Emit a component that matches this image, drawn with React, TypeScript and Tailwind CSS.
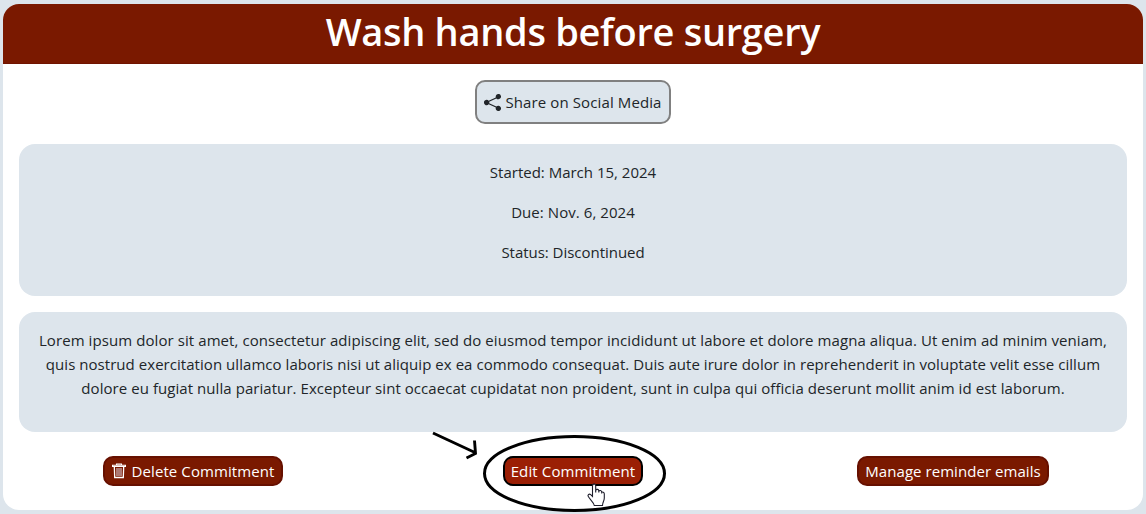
import React from "react";
import { BsShareFill } from "react-icons/bs";

const details = [
  { text: "Started: March 15, 2024", spacing: "tracking-[0px]" },
  { text: "Due: Nov. 6, 2024", spacing: "tracking-[0.06px]" },
  { text: "Status: Discontinued", spacing: "tracking-[-0.03px]" },
];

const description = [
  {
    text: "Lorem ipsum dolor sit amet, consectetur adipiscing elit, sed do eiusmod tempor incididunt ut labore et dolore magna aliqua. Ut enim ad minim veniam,",
    spacing: "tracking-[0.08px]",
  },
  {
    text: "quis nostrud exercitation ullamco laboris nisi ut aliquip ex ea commodo consequat. Duis aute irure dolor in reprehenderit in voluptate velit esse cillum",
    spacing: "tracking-[0.045px]",
  },
  {
    text: "dolore eu fugiat nulla pariatur. Excepteur sint occaecat cupidatat non proident, sunt in culpa qui officia deserunt mollit anim id est laborum.",
    spacing: "tracking-[0.06px]",
  },
];

function TrashIcon() {
  return (
    <svg width="14" height="16" viewBox="0 0 14 16" fill="none" stroke="#fff" className="shrink-0">
      <path d="M0.5 3.500V2.200H13.500V3.500ZM4.500 2.200V1H9.500V2.200" strokeWidth="1.100" />
      <path d="M2.300 3.500L2.700 14.500H11.300L11.700 3.500" strokeWidth="1.300" />
      <path d="M5 5V13M7 5V13M9 5V13" stroke="#e3dce8" />
    </svg>
  );
}

function Annotations() {
  return (
    <svg className="pointer-events-none absolute left-[420px] top-[425px]" width="260" height="89" fill="none" stroke="#000">
      <path d="M13 8L56 28M54.500 15.500L55.500 28.500L46.500 33" strokeWidth="2.900" />
      <ellipse cx="154.500" cy="48.500" rx="90" ry="37" strokeWidth="3" />
      <path
        transform="translate(167 58)"
        d="M5.500 13.500V3C5.500 .2 8.700 .2 8.700 3V9.500V7.200C9.500 5.800 11.600 6.300 11.800 7.700V9.500V8.200C12.500 6.900 14.600 7.400 14.700 8.900V10.500V9.500C15.500 8.600 17.200 9.100 17.300 10.700V15C17.300 18 15.500 19 15.500 22.500H7.300C7 19.500 3.500 17.300 1.300 13.500C.2 11.700 2.300 10.500 3.700 11.700Z"
        fill="#fff"
        stroke="#1d1d2b"
        strokeWidth="1.100"
      />
    </svg>
  );
}

export default function App() {
  return (
    <div className="relative h-[514px] w-[1146px] overflow-hidden bg-[#dde5ec] px-[3px] pt-1 font-['Open_Sans','Noto_Sans',sans-serif] text-[15px] leading-6 text-[#212529]">
      <main className="h-[506px] overflow-hidden rounded-2xl bg-white">
        <header className="flex h-[60px] items-center justify-center border-b border-[#701400] bg-[#7a1900] pb-[5px]">
          <h1 className="whitespace-nowrap text-[38px] font-semibold leading-[48px] tracking-[-0.3px] text-white">Wash hands before surgery</h1>
        </header>
        <div className="px-4 pt-4">
          <div className="flex justify-center">
            <button className="flex h-11 w-[196px] items-center justify-center gap-1 whitespace-nowrap rounded-[10px] border-2 border-[#808080] bg-[#dde5ec]">
              <BsShareFill size={17} className="shrink-0" />
              <span className="tracking-[0.11px]">Share on Social Media</span>
            </button>
          </div>
          <section className="mt-5 flex h-[152px] flex-col items-center gap-4 rounded-2xl bg-[#dde5ec] pt-4">
            {details.map((d) => (
              <p key={d.text} className={d.spacing}>{d.text}</p>
            ))}
          </section>
          <section className="mt-4 flex h-[120px] flex-col items-center whitespace-nowrap rounded-2xl bg-[#dde5ec] pt-4">
            {description.map((d) => (
              <p key={d.text} className={d.spacing}>{d.text}</p>
            ))}
          </section>
        </div>
        <div className="mt-6 grid grid-cols-3 justify-items-center whitespace-nowrap text-white">
          <button className="flex h-[30px] w-[180px] items-center justify-center gap-1.5 rounded-[10px] border-2 border-[#661000] bg-[#7a1900]">
            <TrashIcon />
            <span className="tracking-[0.08px]">Delete Commitment</span>
          </button>
          <button className="flex h-[30px] w-[140px] items-center justify-center rounded-[10px] border-2 border-black bg-[#9b1f05]">
            <span className="tracking-[0.13px]">Edit Commitment</span>
          </button>
          <button className="flex h-[30px] w-[192px] items-center justify-center rounded-[10px] border-2 border-[#661000] bg-[#7a1900]">
            <span className="tracking-[0.05px]">Manage reminder emails</span>
          </button>
        </div>
      </main>
      <Annotations />
    </div>
  );
}
